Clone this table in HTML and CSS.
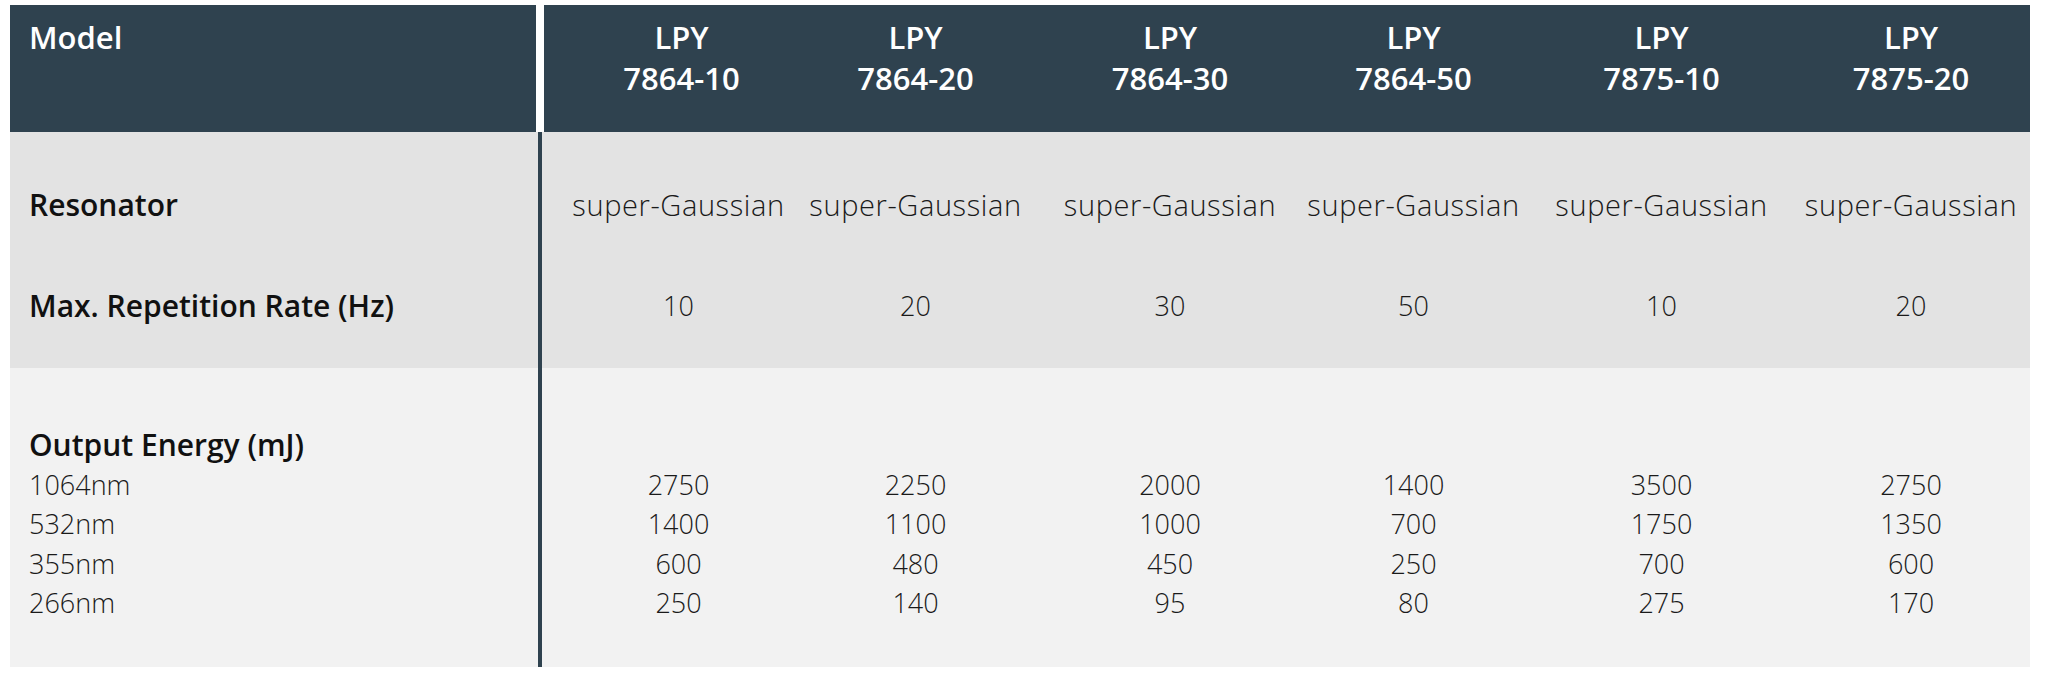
FILE: index.html
```html
<!DOCTYPE html>
<html lang="en">
<head>
<meta charset="utf-8">
<title>LPY Specifications</title>
<link rel="stylesheet" href="styles.css">
</head>
<body>
<div class="spec">
  <div class="head">
    <div class="head-label">Model</div>
    <div class="head-models">
      <div class="model">LPY<br>7864-10</div>
      <div class="model">LPY<br>7864-20</div>
      <div class="model">LPY<br>7864-30</div>
      <div class="model">LPY<br>7864-50</div>
      <div class="model">LPY<br>7875-10</div>
      <div class="model">LPY<br>7875-20</div>
    </div>
  </div>

  <div class="band band-dark">
    <div class="labels">
      <div class="label">Resonator</div>
      <div class="label">Max. Repetition Rate (Hz)</div>
    </div>
    <div class="values">
      <div class="val val-text">super-Gaussian</div>
      <div class="val val-text">super-Gaussian</div>
      <div class="val val-text">super-Gaussian</div>
      <div class="val val-text">super-Gaussian</div>
      <div class="val val-text">super-Gaussian</div>
      <div class="val val-text">super-Gaussian</div>
      <div class="val">10</div>
      <div class="val">20</div>
      <div class="val">30</div>
      <div class="val">50</div>
      <div class="val">10</div>
      <div class="val">20</div>
    </div>
  </div>

  <div class="band band-light">
    <div class="labels">
      <div class="label">Output Energy (mJ)</div>
      <div class="sub">1064nm<br>532nm<br>355nm<br>266nm</div>
    </div>
    <div class="values values-energy">
      <div class="val">2750<br>1400<br>600<br>250</div>
      <div class="val">2250<br>1100<br>480<br>140</div>
      <div class="val">2000<br>1000<br>450<br>95</div>
      <div class="val">1400<br>700<br>250<br>80</div>
      <div class="val">3500<br>1750<br>700<br>275</div>
      <div class="val">2750<br>1350<br>600<br>170</div>
    </div>
  </div>
</div>
</body>
</html>
```

FILE: styles.css
```css
html, body {
  margin: 0;
  padding: 0;
  background: #ffffff;
}

body {
  font-family: "Open Sans", "Noto Sans", sans-serif;
  color: #1a1a1a;
}

.spec {
  width: 2020px;
  margin: 5px 0 0 10px;
}

/* header */
.head {
  display: flex;
  gap: 8px;
  height: 127px;
  background: #ffffff;
}

.head-label {
  width: 526px;
  box-sizing: border-box;
  background: #2f424f;
  color: #ffffff;
  font-size: 31px;
  font-weight: 600;
  line-height: 41px;
  padding: 12px 0 0 19px;
}

.head-models {
  flex: 1;
  display: grid;
  grid-template-columns: 253px 245px 248px 247px 249px 244px;
  align-content: start;
  background: #2f424f;
  color: #ffffff;
  font-size: 31px;
  font-weight: 600;
  line-height: 41px;
  padding-top: 12px;
}

.model {
  text-align: center;
}

.model:nth-child(1) { padding-left: 22px; }
.model:nth-child(2) { padding-right: 8px; }
.model:nth-child(3) { padding-left: 8px; }
.model:nth-child(6) { padding-left: 6px; }

/* body bands */
.band {
  display: flex;
}

.band-dark {
  background: #e3e3e3;
  height: 236px;
}

.band-light {
  background: #f2f2f2;
  height: 299px;
}

.labels {
  width: 532px;
  box-sizing: border-box;
  border-right: 4px solid #2f424f;
  padding-left: 19px;
}

.band-dark .labels {
  padding-top: 53px;
  display: flex;
  flex-direction: column;
  row-gap: 61px;
}

.values {
  display: grid;
  grid-template-columns: 255px 245px 248px 247px 249px 244px;
  align-content: start;
}

.band-dark .values {
  padding-top: 53px;
  row-gap: 61px;
}

.values .val:nth-child(6n+1) { padding-left: 18px; }
.values .val:nth-child(6n+2) { padding-right: 8px; }
.values .val:nth-child(6n+3) { padding-left: 8px; }
.values .val:nth-child(6n+6) { padding-left: 6px; }

.label {
  font-size: 30px;
  font-weight: 600;
  line-height: 40px;
  color: #111111;
}

.val {
  font-size: 27px;
  font-weight: 300;
  line-height: 40px;
  text-align: center;
  white-space: nowrap;
  color: #1a1a1a;
}

.val-text {
  font-size: 29px;
  letter-spacing: 0.6px;
}

.band-light .labels {
  padding-top: 57px;
}

.band-light .label,
.band-light .sub,
.band-light .val {
  line-height: 39.5px;
}

.sub {
  font-size: 27px;
  font-weight: 300;
  color: #1a1a1a;
}

.values-energy {
  padding-top: 96.5px;
}
```
